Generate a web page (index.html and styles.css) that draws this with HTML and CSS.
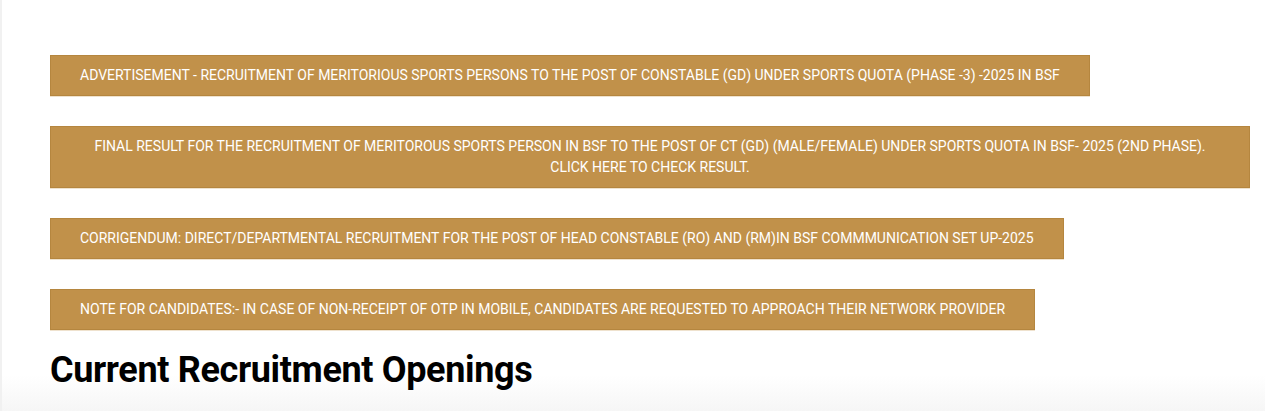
FILE: index.html
```html
<!DOCTYPE html>
<html>
<head>
<meta charset="utf-8">
<link rel="stylesheet" href="styles.css">
</head>
<body>
<div class="page">
  <div class="notices">
    <a class="notice">ADVERTISEMENT - RECRUITMENT OF MERITORIOUS SPORTS PERSONS TO THE POST OF CONSTABLE (GD) UNDER SPORTS QUOTA (PHASE -3) -2025 IN BSF</a>
    <a class="notice notice-wide">FINAL RESULT FOR THE RECRUITMENT OF MERITOROUS SPORTS PERSON IN BSF TO THE POST OF CT (GD) (MALE/FEMALE) UNDER SPORTS QUOTA IN BSF- 2025 (2ND PHASE).<br>CLICK HERE TO CHECK RESULT.</a>
    <a class="notice">CORRIGENDUM: DIRECT/DEPARTMENTAL RECRUITMENT FOR THE POST OF HEAD CONSTABLE (RO) AND (RM)IN BSF COMMMUNICATION SET UP-2025</a>
    <a class="notice">NOTE FOR CANDIDATES:- IN CASE OF NON-RECEIPT OF OTP IN MOBILE, CANDIDATES ARE REQUESTED TO APPROACH THEIR NETWORK PROVIDER</a>
  </div>
  <h2 class="heading">Current Recruitment Openings</h2>
</div>
</body>
</html>
```

FILE: styles.css
```css
html, body {
  margin: 0;
  padding: 0;
  background: #ffffff;
}
body {
  font-family: Roboto, "Liberation Sans", sans-serif;
  border-left: 2px solid #f1f1f1;
  min-height: 411px;
  box-sizing: border-box;
  background: linear-gradient(to bottom, #ffffff 0, #ffffff 375px, #f6f6f6 411px);
}
.page {
  padding: 55px 15px 0 48px;
}
.notices {
  display: flex;
  flex-direction: column;
  align-items: flex-start;
  gap: 30px;
  width: 1200px;
}
.notice {
  display: block;
  box-sizing: border-box;
  background: #c1914a;
  border: 1px solid #b5863f;
  color: #ffffff;
  font-size: 14px;
  line-height: 21px;
  padding: 9px 29px;
  text-transform: uppercase;
  text-decoration: none;
  box-shadow: 0 1px 0 rgba(190, 140, 60, 0.25);
}
.notice-wide {
  align-self: stretch;
  text-align: center;
}
.heading {
  margin: 17px 0 0 0;
  font-size: 36px;
  font-weight: 700;
  line-height: 46px;
  color: #000000;
  letter-spacing: -0.35px;
}
```
